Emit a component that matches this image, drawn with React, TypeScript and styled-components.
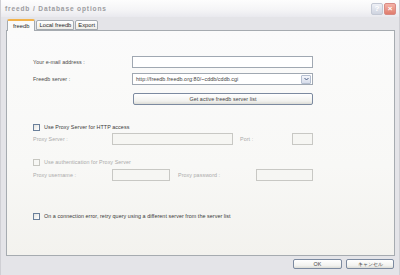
import React from 'react';
import styled, { createGlobalStyle } from 'styled-components';

const GlobalStyle = createGlobalStyle`
  html, body {
    margin: 0;
    padding: 0;
    background: #e4e4e8;
  }
  * {
    box-sizing: border-box;
  }
`;

const Window = styled.div`
  width: 400px;
  height: 275px;
  display: flex;
  flex-direction: column;
  background: #e4e4e8;
  border-left: 1px solid #cfcfd4;
  border-right: 1px solid #cfcfd4;
  font-family: "Liberation Sans", Arial, sans-serif;
  color: #4a4a4a;
  overflow: hidden;
`;

const TitleBar = styled.div`
  height: 17px;
  display: flex;
  align-items: center;
  padding: 0 3px 0 4px;
  background: linear-gradient(#fdfdfd, #f4f4f6 60%, #e9e9ee);
`;

const Title = styled.span`
  flex: 1;
  font-size: 6.6px;
  font-weight: bold;
  letter-spacing: 0.85px;
  color: #9c9ca0;
`;

const CaptionButton = styled.div<{ $close?: boolean }>`
  width: 12px;
  height: 12px;
  margin-left: 1px;
  border-radius: 2px;
  display: flex;
  align-items: center;
  justify-content: center;
  font-size: 8px;
  font-weight: bold;
  color: #fff;
  border: 1px solid ${p => (p.$close ? '#d88a84' : '#c3c8d4')};
  background: ${p =>
    p.$close
      ? 'linear-gradient(#f4b3a8, #e07c6c)'
      : 'linear-gradient(#eef0f6, #cfd4e0)'};
`;

const TabStrip = styled.div`
  height: 12px;
  display: flex;
  align-items: flex-end;
  padding-left: 6px;
  margin-top: 1px;
  position: relative;
  z-index: 1;
`;

const Tab = styled.div<{ $active?: boolean }>`
  height: ${p => (p.$active ? 12 : 10)}px;
  margin-bottom: ${p => (p.$active ? -1 : 0)}px;
  padding: 0 ${p => (p.$active ? 5 : 2)}px;
  margin-right: 1px;
  display: flex;
  align-items: center;
  font-size: 5.8px;
  color: #2a2a2a;
  border: 1px solid #a4aab0;
  border-bottom: ${p => (p.$active ? 'none' : '1px solid #a4aab0')};
  border-top: ${p => (p.$active ? '2px solid #f2b24a' : '1px solid #a4aab0')};
  border-radius: 2px 2px 0 0;
  background: ${p => (p.$active ? '#fbfbfa' : 'linear-gradient(#ffffff, #eeede8)')};
`;

const Panel = styled.div`
  margin-left: 5px;
  width: 389px;
  height: 226px;
  border: 1px solid #a6abb0;
  background: linear-gradient(#fbfbfb, #f8f8f6 60%, #f3f2ee);
  padding: 0 81px 0 26px;
  display: flex;
  flex-direction: column;
  font-size: 5.4px;
  letter-spacing: 0.05px;
`;

const Row = styled.div<{ $top: number }>`
  display: flex;
  align-items: center;
  height: 12px;
  margin-top: ${p => p.$top}px;
`;

const Label = styled.span<{ $width?: number; $disabled?: boolean }>`
  width: ${p => (p.$width ? `${p.$width}px` : 'auto')};
  flex-shrink: 0;
  color: ${p => (p.$disabled ? '#ababab' : '#4a4a4a')};
  white-space: nowrap;
`;

const Input = styled.div<{ $width?: number; $disabled?: boolean }>`
  height: 12px;
  flex: ${p => (p.$width ? 'none' : '1')};
  width: ${p => (p.$width ? `${p.$width}px` : 'auto')};
  border: 1px solid ${p => (p.$disabled ? '#c8c8c4' : '#a0a8b2')};
  background: ${p => (p.$disabled ? '#f6f6f3' : '#ffffff')};
  display: flex;
  align-items: center;
  padding-left: 3px;
  color: #444;
  white-space: nowrap;
`;

const SelectBox = styled(Input)`
  padding-right: 1px;
`;

const SelectValue = styled.span`
  flex: 1;
`;

const DropButton = styled.div`
  width: 10px;
  height: 9px;
  border: 1px solid #b5bfd0;
  border-radius: 1px;
  background: linear-gradient(#f4f6fb, #d6dcea);
  display: flex;
  align-items: center;
  justify-content: center;
`;

const PushButton = styled.div<{ $width?: number }>`
  height: ${p => (p.$width ? 10 : 12)}px;
  width: ${p => (p.$width ? `${p.$width}px` : 'auto')};
  flex: ${p => (p.$width ? 'none' : '1')};
  border: 1px solid #7c8aa0;
  border-radius: 2px;
  background: linear-gradient(#ffffff, #f2f2ef 70%, #dcdcd6);
  display: flex;
  align-items: center;
  justify-content: center;
  font-size: 5.4px;
  color: #444;
  white-space: nowrap;
`;

const CheckRow = styled.div<{ $top: number; $disabled?: boolean }>`
  display: flex;
  align-items: center;
  gap: 4px;
  height: 8px;
  margin-top: ${p => p.$top}px;
  color: ${p => (p.$disabled ? '#ababab' : '#3a3a3a')};
  white-space: nowrap;
`;

const Box = styled.div<{ $disabled?: boolean }>`
  width: 7px;
  height: 7px;
  border: 1px solid ${p => (p.$disabled ? '#c6c6c0' : '#6a7f9a')};
  background: ${p => (p.$disabled ? '#f7f7f4' : 'linear-gradient(135deg, #e4e4e0, #ffffff)')};
`;

const Spacer = styled.span<{ $width: number }>`
  width: ${p => p.$width}px;
  flex-shrink: 0;
`;

const Footer = styled.div`
  display: flex;
  justify-content: flex-end;
  gap: 4px;
  padding: 3px 5px 0 0;
`;

const App: React.FC = () => (
  <>
    <GlobalStyle />
    <Window>
      <TitleBar>
        <Title>freedb / Database options</Title>
        <CaptionButton>?</CaptionButton>
        <CaptionButton $close>×</CaptionButton>
      </TitleBar>
      <TabStrip>
        <Tab $active>freedb</Tab>
        <Tab>Local freedb</Tab>
        <Tab>Export</Tab>
      </TabStrip>
      <Panel>
        <Row $top={25}>
          <Label $width={99}>Your e-mail address :</Label>
          <Input />
        </Row>
        <Row $top={5}>
          <Label $width={99}>Freedb server :</Label>
          <SelectBox>
            <SelectValue>http://freedb.freedb.org:80/~cddb/cddb.cgi</SelectValue>
            <DropButton>
              <svg width="5" height="4" viewBox="0 0 5 4">
                <path d="M0.5 1 L2.5 3 L4.5 1" fill="none" stroke="#4d6185" strokeWidth="1" />
              </svg>
            </DropButton>
          </SelectBox>
        </Row>
        <Row $top={8}>
          <Spacer $width={100} />
          <PushButton>Get active freedb server list</PushButton>
        </Row>
        <CheckRow $top={18}>
          <Box />
          <span>Use Proxy Server for HTTP access</span>
        </CheckRow>
        <Row $top={2}>
          <Label $width={79} $disabled>Proxy Server :</Label>
          <Input $width={121} $disabled />
          <Spacer $width={7} />
          <Label $width={52} $disabled>Port :</Label>
          <Input $disabled />
        </Row>
        <CheckRow $top={13} $disabled>
          <Box $disabled />
          <span>Use authentication for Proxy Server</span>
        </CheckRow>
        <Row $top={3}>
          <Label $width={79} $disabled>Proxy username :</Label>
          <Input $width={58} $disabled />
          <Spacer $width={8} />
          <Label $width={78} $disabled>Proxy password :</Label>
          <Input $disabled />
        </Row>
        <CheckRow $top={31}>
          <Box />
          <span>On a connection error, retry query using a different server from the server list</span>
        </CheckRow>
      </Panel>
      <Footer>
        <PushButton $width={49}>OK</PushButton>
        <PushButton $width={48}>キャンセル</PushButton>
      </Footer>
    </Window>
  </>
);

export default App;
